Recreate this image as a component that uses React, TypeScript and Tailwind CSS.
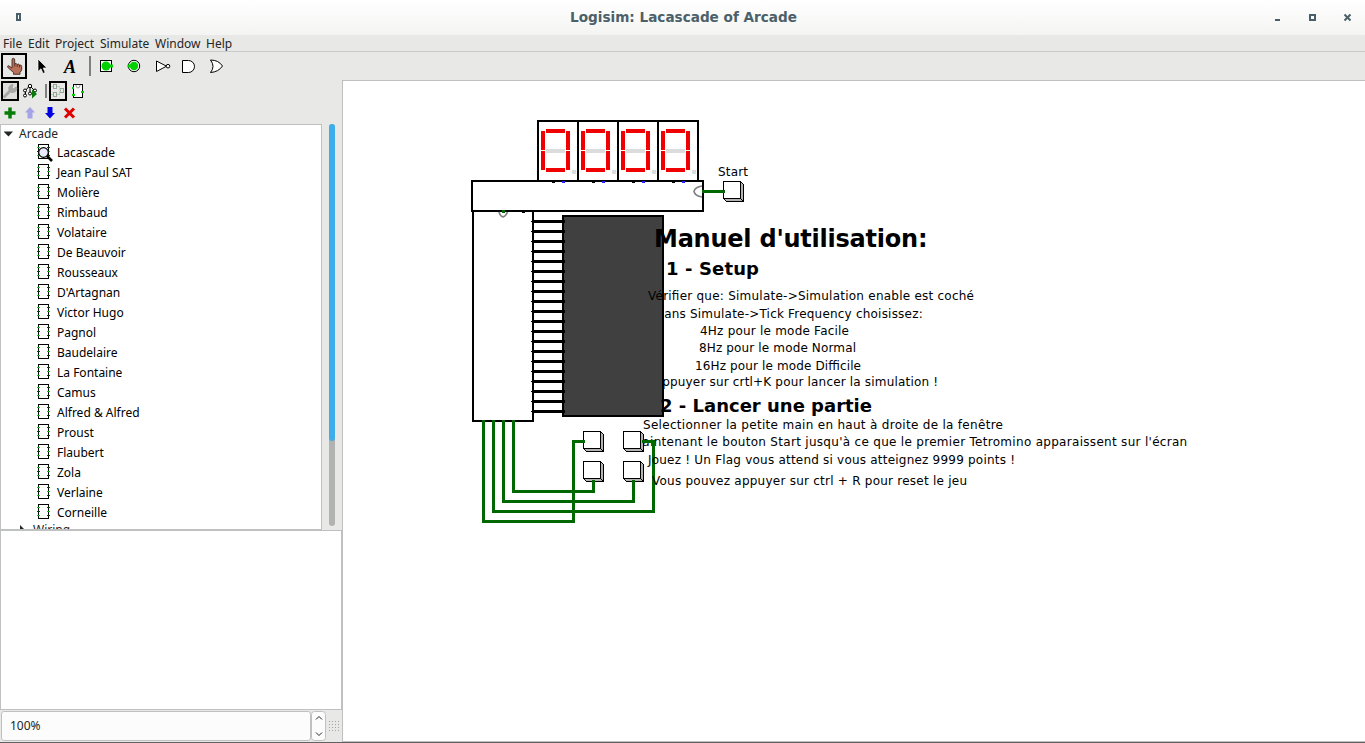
import React from "react";

const ui = "font-['Noto_Sans','Open_Sans',sans-serif]";

const circuits = [
  "Lacascade", "Jean Paul SAT", "Molière", "Rimbaud", "Volataire", "De Beauvoir", "Rousseaux",
  "D'Artagnan", "Victor Hugo", "Pagnol", "Baudelaire", "La Fontaine", "Camus", "Alfred & Alfred",
  "Proust", "Flaubert", "Zola", "Verlaine", "Corneille",
];

const menus: [string, string][] = [
  ["File", "w-[25px]"], ["Edit", "w-[27px]"], ["Project", "w-[45px]"],
  ["Simulate", "w-[55px]"], ["Window", "w-[51px]"], ["Help", "w-[40px]"],
];

function Chip({ active }: { active: boolean }) {
  return (
    <svg className="h-5 w-5 shrink-0" viewBox="0 0 20 20" shapeRendering="crispEdges">
      <rect x="5.5" y="1.5" width="10" height="14" fill="#fff" stroke="#000" />
      <path d="M4 4.5h3M4 12.5h3M14 8.5h3" stroke="#00d000" />
      <path d="M4 8.5h3M14 4.5h3M14 12.5h3" stroke="#004800" />
      {active && (
        <g shapeRendering="auto">
          <circle cx="10.5" cy="9.5" r="4.8" fill="#e8e8ff" stroke="#000" strokeWidth="1.2" />
          <path d="M14 13l5 5" stroke="#000" strokeWidth="2.6" />
        </g>
      )}
    </svg>
  );
}

function Toolbar() {
  return (
    <svg className="h-7 w-[343px] shrink-0" viewBox="0 52 343 28">
      <rect x="2" y="54" width="24" height="24" fill="none" stroke="#000" strokeWidth="2" />
      <path d="M12 68V59.800q0-1.500 1.300-1.500t1.400 1.500v4q1.800-1 2.400.6 1.800-.8 2.400.6 2.200-.4 2.200 1.500v3.500l-1.700 2.500v1.800h-6.500v-1.800l-2.500-2.200-3.300-3q-.6-1.500 1-1.600z" fill="#b97058" stroke="#2b1a14" strokeWidth="0.8" />
      <path d="M14.800 64v2.500M17.200 64.500v2.500M19.500 65v2.500" stroke="#2b1a14" strokeWidth="0.7" />
      <path d="M38 59v12.500l3-2.700 2 4.700 2.200-1-2-4.500h3.700z" fill="#000" stroke="#fff" strokeWidth="0.7" />
      <text x="64" y="72.500" fontFamily="Liberation Serif, serif" fontSize="18" fontStyle="italic" fontWeight="bold">A</text>
      <path d="M90 56v20" stroke="#808080" strokeWidth="2" />
      <rect x="100.500" y="60.500" width="11" height="11" fill="#fff" stroke="#000" />
      <circle cx="106" cy="66" r="4.500" fill="#00d200" /><path d="M106 66h7" stroke="#00d200" strokeWidth="3" />
      <circle cx="134" cy="66" r="5.700" fill="#fff" stroke="#000" /><circle cx="134" cy="66" r="4.200" fill="#00d200" /><path d="M127.500 66h6" stroke="#00d200" strokeWidth="3" />
      <path d="M156.500 61v10.500l10-5.300z" fill="#fff" stroke="#000" /><circle cx="168" cy="66.200" r="1.800" fill="#fff" stroke="#000" />
      <path d="M182.500 60.500h6a6 6 0 0 1 0 12h-6z" fill="#fff" stroke="#000" />
      <path d="M210.500 60q8 0 12 6-4 6-12 6.500 5-6 0-12.500z" fill="#fff" stroke="#000" />
    </svg>
  );
}

function ExplorerTools() {
  return (
    <svg className="h-[44px] w-full shrink-0" viewBox="0 80 342 44">
      <rect x="2" y="82" width="16" height="18" fill="#dededc" stroke="#000" strokeWidth="2" />
      <path d="M4.500 96.500l7-7" stroke="#a8a8a8" strokeWidth="3" strokeLinecap="round" />
      <path d="M16.500 87a4 4 0 1 1-3.500-2.500l-1 3 1.500 1.200z" fill="#a8a8a8" stroke="#a8a8a8" />
      <g fill="#fff" stroke="#000">
        <path d="M28.500 87l-3 3.500v4M31 87l3.500 3.500M30 88v5" />
        <circle cx="30" cy="86" r="1.700" /><circle cx="25" cy="90.500" r="1.500" /><circle cx="25" cy="95.500" r="1.500" />
        <circle cx="30" cy="93.500" r="1.500" /><circle cx="35" cy="90.500" r="1.500" />
      </g>
      <path d="M32 89.500l5 4.500-5 4.500z" fill="#087c08" />
      <path d="M46 84v14" stroke="#808080" strokeWidth="2" />
      <rect x="50" y="82" width="16" height="18" fill="#e8e8e6" stroke="#000" strokeWidth="2" />
      <g fill="none" stroke="#9e9e9e" shapeRendering="crispEdges">
        <rect x="53.500" y="84.500" width="3" height="4" /><rect x="53.500" y="92.500" width="3" height="4" /><rect x="60.500" y="88.500" width="3" height="4" />
        <path d="M57 86.500h2.500v3h1M57 94.500h2.500v-3h1M51 86.500h2M51 94.500h2" stroke="#a0e0a0" />
      </g>
      <g shapeRendering="crispEdges">
        <rect x="73.500" y="84.500" width="9" height="13" fill="#fff" stroke="#000" />
        <path d="M72 87.500h2M72 94.500h3M81 91.500h3" stroke="#00d200" strokeWidth="2" />
      </g>
      <path d="M76 85q0 3 2 3t2-3" fill="none" stroke="#999" />
      <path d="M10 107.500v11M4.500 113h11" stroke="#087c08" strokeWidth="3.500" />
      <path d="M30 107l5 5.500h-2.500v6h-5v-6H25z" fill="#a4a4e6" />
      <path d="M50 118.500l5-5.500h-2.500v-6h-5v6H45z" fill="#0000e0" />
      <path d="M65 108.500l9 9M74 108.500l-9 9" stroke="#e00000" strokeWidth="3" />
    </svg>
  );
}

function Digit({ x }: { x: number }) {
  return (
    <g>
      <rect x={x} y="121" width="40" height="60" fill="#fff" stroke="#000" strokeWidth="2" />
      <path d={`M${x + 8} 131h19M${x + 8} 170h19M${x + 5} 131v19M${x + 5} 151v19M${x + 30} 131v19M${x + 30} 151v19`} stroke="#f00000" strokeWidth="4" />
      <path d={`M${x + 8} 151h19`} stroke="#dcdcdc" strokeWidth="4" />
      <rect x={x + 34} y="170" width="4" height="4" fill="#dcdcdc" />
    </g>
  );
}

function PushButton({ x, y }: { x: number; y: number }) {
  return (
    <g>
      <path d={`M${x + 0.5} ${y + 17.500}l3 3h17v-17l-3-3z`} fill="#b4b4b4" stroke="#000" />
      <rect x={x + 0.5} y={y + 0.5} width="17" height="17" fill="#fff" stroke="#000" />
      <path d={`M${x + 17.500} ${y + 17.500}l3 3`} stroke="#000" />
    </g>
  );
}

type Line = [string, number, number, number, number];

// Labels that the components partly cover
const under: Line[] = [
  ["Dans Simulate->Tick Frequency choisissez:", 654.7, 318, 268, 12],
  ["Appuyer sur crtl+K pour lancer la simulation !", 653.8, 386, 284.200, 12],
  ["Maintenant le bouton Start jusqu'à ce que le premier Tetromino apparaissent sur l'écran", 631.700, 446, 555.500, 12],
];
const notes: Line[] = [
  ["Start", 718, 176, 30, 12],
  ["Manuel d'utilisation:", 654, 247, 273.500, 24],
  ["1 - Setup", 666, 275, 93, 18],
  ["Vérifier que: Simulate->Simulation enable est coché", 648, 300, 326, 12],
  ["4Hz pour le mode Facile", 700, 335, 149, 12],
  ["8Hz pour le mode Normal", 699, 352, 157, 12],
  ["16Hz pour le mode Difficile", 695, 370, 166, 12],
  ["2 - Lancer une partie", 660, 412, 212, 18],
  ["Selectionner la petite main en haut à droite de la fenêtre", 643, 429, 360, 12],
  ["Jouez ! Un Flag vous attend si vous atteignez 9999 points !", 648, 464, 367, 12],
  ["Vous pouvez appuyer sur ctrl + R pour reset le jeu", 652, 485, 315, 12],
];

function Notes({ lines }: { lines: Line[] }) {
  return (
    <g fontFamily="DejaVu Sans, sans-serif" fill="#000">
      {lines.map(([t, x, y, w, s]) => (
        <text key={t} x={x} y={y} fontSize={s} fontWeight={s > 12 ? 700 : 400} textLength={w}>{t}</text>
      ))}
    </g>
  );
}

function Canvas() {
  return (
    <svg className="block h-[660px] w-[1022px]" viewBox="343 81 1022 660">
      <Notes lines={under} />
      <g shapeRendering="crispEdges">
        {[538, 578, 618, 658].map((x) => <Digit key={x} x={x} />)}
        <rect x="473" y="211" width="60" height="210" fill="#fff" stroke="#000" strokeWidth="2" />
        <rect x="472" y="181" width="231" height="30" fill="#fff" stroke="#000" strokeWidth="2" />
        {[552, 592, 632, 672].map((x) => (
          <g key={x}>
            <path d={`M${x} 182.500h3`} stroke="#000" />
            <path d={`M${x + 10} 182h3`} stroke="#2020ff" strokeWidth="2" />
          </g>
        ))}
        <rect x="563" y="216" width="100" height="200" fill="#404040" stroke="#000" strokeWidth="2" />
        {Array.from({ length: 20 }, (_, i) => (
          <g key={i}>
            <path d={`M532 ${221.500 + i * 10}h33`} stroke="#000" strokeWidth="3" />
            <path d={`M531 ${221.500 + i * 10}h2`} stroke="#000" />
          </g>
        ))}
        <PushButton x={723} y={181} />
        <PushButton x={583} y={431} />
        <PushButton x={623} y={431} />
        <PushButton x={583} y={461} />
        <PushButton x={623} y={461} />
        <path d="M522 212.500h3" stroke="#000" />
        <path d="M702 191.500h23M483.500 420v101.500h90v-80H585M493.500 420v91.500h160v-70H642M503.500 420v81.500h130V480M513.500 420v71.500h80V480" fill="none" stroke="#006800" strokeWidth="3" />
      </g>
      <path d="M702 186q-7 1-8 5.500 1 4.500 8 5.500M499 212q1 4 4 5 3-1 4.500-5" fill="none" stroke="#808080" strokeWidth="1.600" />
      <rect x="502" y="210" width="3" height="3" fill="#006800" />
      <Notes lines={notes} />
    </svg>
  );
}

export default function App() {
  return (
    <div className={`flex h-[743px] w-[1365px] flex-col overflow-hidden bg-[#e8e8e6] text-[12px] text-[#232627] ${ui}`}>
      <header className="flex h-[35px] shrink-0 items-center bg-linear-to-b from-white to-[#f4f4f3]">
        <svg className="h-[35px] w-10" viewBox="0 0 40 35"><path d="M17 14h3v6h-3z" fill="none" stroke="#4a6068" strokeWidth="2" /></svg>
        <h1 className="flex-1 pl-[72px] text-center font-['DejaVu_Sans',sans-serif] text-[13.600px] leading-none font-bold text-[#4b6068]">Logisim: Lacascade of Arcade</h1>
        <svg className="h-[35px] w-[110px]" viewBox="1255 0 110 35" shapeRendering="crispEdges">
          <path d="M1275 20h5" stroke="#4a6068" strokeWidth="2" />
          <rect x="1310" y="15" width="5" height="5" fill="none" stroke="#4a6068" strokeWidth="2" />
          <path d="M1344.500 14.500l6 6M1350.500 14.500l-6 6" stroke="#4a6068" strokeWidth="2" shapeRendering="auto" />
        </svg>
      </header>
      <nav className="flex h-[17px] shrink-0 border-b border-[#cacac8] pt-px pl-[3px] leading-4">
        {menus.map(([m, w]) => <span key={m} className={`${w} whitespace-nowrap`}>{m}</span>)}
      </nav>
      <div className="flex h-7 shrink-0"><Toolbar /></div>
      <main className="flex h-[662px] shrink-0">
        <aside className="flex w-[342px] shrink-0 flex-col">
          <ExplorerTools />
          <div className="flex h-[406px] shrink-0">
            <div className="w-[322px] overflow-hidden border border-[#bfc1c1] bg-white">
              <div className="flex h-[18px] items-center gap-[5px] pl-[3px] leading-4">
                <svg className="h-[10px] w-[10px]" viewBox="0 0 10 10"><path d="M-0.500 2.500h9.500L4.500 7.500z" fill="#232627" /></svg>
                Arcade
              </div>
              {circuits.map((name, i) => (
                <div key={name} className="flex h-5 items-center gap-[4px] pl-8 whitespace-nowrap text-black">
                  <Chip active={i === 0} />{name}
                </div>
              ))}
              <div className="flex h-[14px] items-center gap-[7px] pl-[17px] leading-[14px]">
                <svg className="h-[10px] w-2" viewBox="0 0 8 10"><path d="M2 0l5 5-5 5z" fill="#232627" /></svg>Wiring
              </div>
            </div>
            <div className="flex w-5 justify-center">
              <div className="h-[402px] w-1.5 rounded-full bg-[#b1b3b2]"><div className="h-[317px] rounded-full bg-[#3daee9]" /></div>
            </div>
          </div>
          <div className="h-[180px] shrink-0 border border-[#bfc1c1] bg-white" />
          <div className="flex h-8 pt-px pl-px">
            <div className="flex h-[30px] w-[310px] items-center rounded-[3px] border border-[#bfc1c1] bg-[#fcfcfc] pl-2">100%</div>
            <svg className="h-[30px] w-4" viewBox="0 0 16 30">
              <rect x="0.5" y="0.5" width="14" height="29" rx="3" fill="#fcfcfc" stroke="#bfc1c1" />
              <path d="M5 8.500l3-3 3 3M5 21.500l3 3 3-3" fill="none" stroke="#232627" />
            </svg>
            <svg className="h-[30px] w-[14px]" viewBox="0 0 14 30"><path d="M2 10.500h12M2 13.500h12M2 16.500h12M2 19.500h12" stroke="#a2a2a2" strokeDasharray="1 2" /></svg>
          </div>
        </aside>
        <section className="h-[662px] w-[1023px] border-y border-l border-[#bfc1c1] bg-white"><Canvas /></section>
      </main>
      <div className="h-px shrink-0 bg-[#606060]" />
    </div>
  );
}
